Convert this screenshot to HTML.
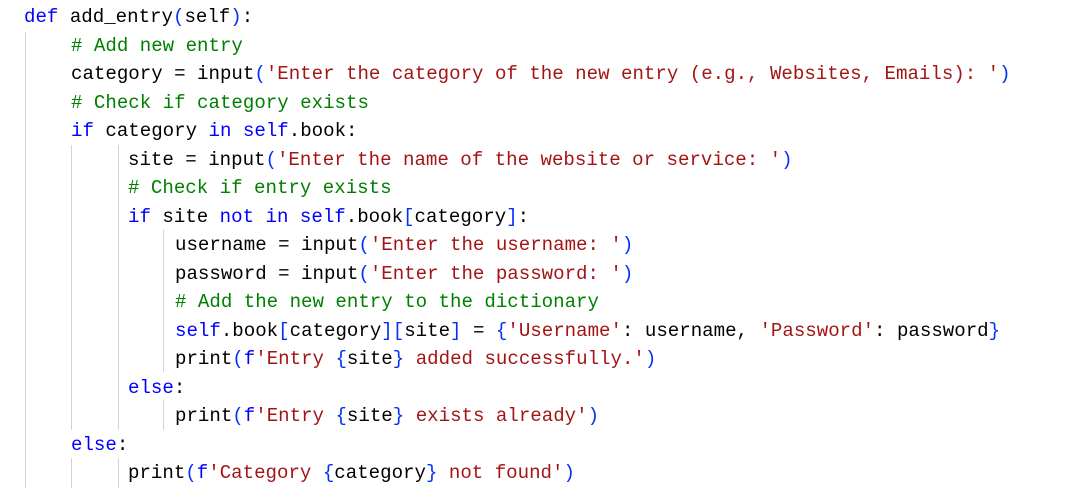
<!DOCTYPE html>
<html><head><meta charset="utf-8"><style>
body{margin:0;width:1078px;height:493px;background:#fff;overflow:hidden;position:relative}
.l{position:absolute;left:0;height:28px;line-height:28px;font-family:"Liberation Mono",monospace;font-size:19.1px;color:#000;white-space:pre}
.k{color:#0000ff}.s{color:#a31515}.c{color:#008000}.p{color:#0431fa}
.g{position:absolute;width:1px;background:#d4d4d4}
</style></head><body>
<div class="g" style="left:25px;top:32px;height:456px"></div>
<div class="g" style="left:71px;top:145px;height:285px"></div>
<div class="g" style="left:71px;top:458px;height:30px"></div>
<div class="g" style="left:118px;top:145px;height:285px"></div>
<div class="g" style="left:118px;top:458px;height:30px"></div>
<div class="g" style="left:163px;top:230px;height:142px"></div>
<div class="g" style="left:163px;top:400px;height:30px"></div>

<div class="l" style="top:3px;left:24px"><span class="k">def</span> add_entry<span class="p">(</span>self<span class="p">)</span>:</div>
<div class="l" style="top:31.5px;left:71px"><span class="c"># Add new entry</span></div>
<div class="l" style="top:60px;left:71px">category = input<span class="p">(</span><span class="s">'Enter the category of the new entry (e.g., Websites, Emails): '</span><span class="p">)</span></div>
<div class="l" style="top:88.5px;left:71px"><span class="c"># Check if category exists</span></div>
<div class="l" style="top:117px;left:71px"><span class="k">if</span> category <span class="k">in</span> <span class="k">self</span>.book:</div>
<div class="l" style="top:145.5px;left:128px">site = input<span class="p">(</span><span class="s">'Enter the name of the website or service: '</span><span class="p">)</span></div>
<div class="l" style="top:174px;left:128px"><span class="c"># Check if entry exists</span></div>
<div class="l" style="top:202.5px;left:128px"><span class="k">if</span> site <span class="k">not</span> <span class="k">in</span> <span class="k">self</span>.book<span class="p">[</span>category<span class="p">]</span>:</div>
<div class="l" style="top:231px;left:175px">username = input<span class="p">(</span><span class="s">'Enter the username: '</span><span class="p">)</span></div>
<div class="l" style="top:259.5px;left:175px">password = input<span class="p">(</span><span class="s">'Enter the password: '</span><span class="p">)</span></div>
<div class="l" style="top:288px;left:175px"><span class="c"># Add the new entry to the dictionary</span></div>
<div class="l" style="top:316.5px;left:175px"><span class="k">self</span>.book<span class="p">[</span>category<span class="p">][</span>site<span class="p">]</span> = <span class="p">{</span><span class="s">'Username'</span>: username, <span class="s">'Password'</span>: password<span class="p">}</span></div>
<div class="l" style="top:345px;left:175px">print<span class="p">(</span><span class="k">f</span><span class="s">'Entry </span><span class="p">{</span>site<span class="p">}</span><span class="s"> added successfully.'</span><span class="p">)</span></div>
<div class="l" style="top:373.5px;left:128px"><span class="k">else</span>:</div>
<div class="l" style="top:402px;left:175px">print<span class="p">(</span><span class="k">f</span><span class="s">'Entry </span><span class="p">{</span>site<span class="p">}</span><span class="s"> exists already'</span><span class="p">)</span></div>
<div class="l" style="top:430.5px;left:71px"><span class="k">else</span>:</div>
<div class="l" style="top:459px;left:128px">print<span class="p">(</span><span class="k">f</span><span class="s">'Category </span><span class="p">{</span>category<span class="p">}</span><span class="s"> not found'</span><span class="p">)</span></div>
</body></html>
